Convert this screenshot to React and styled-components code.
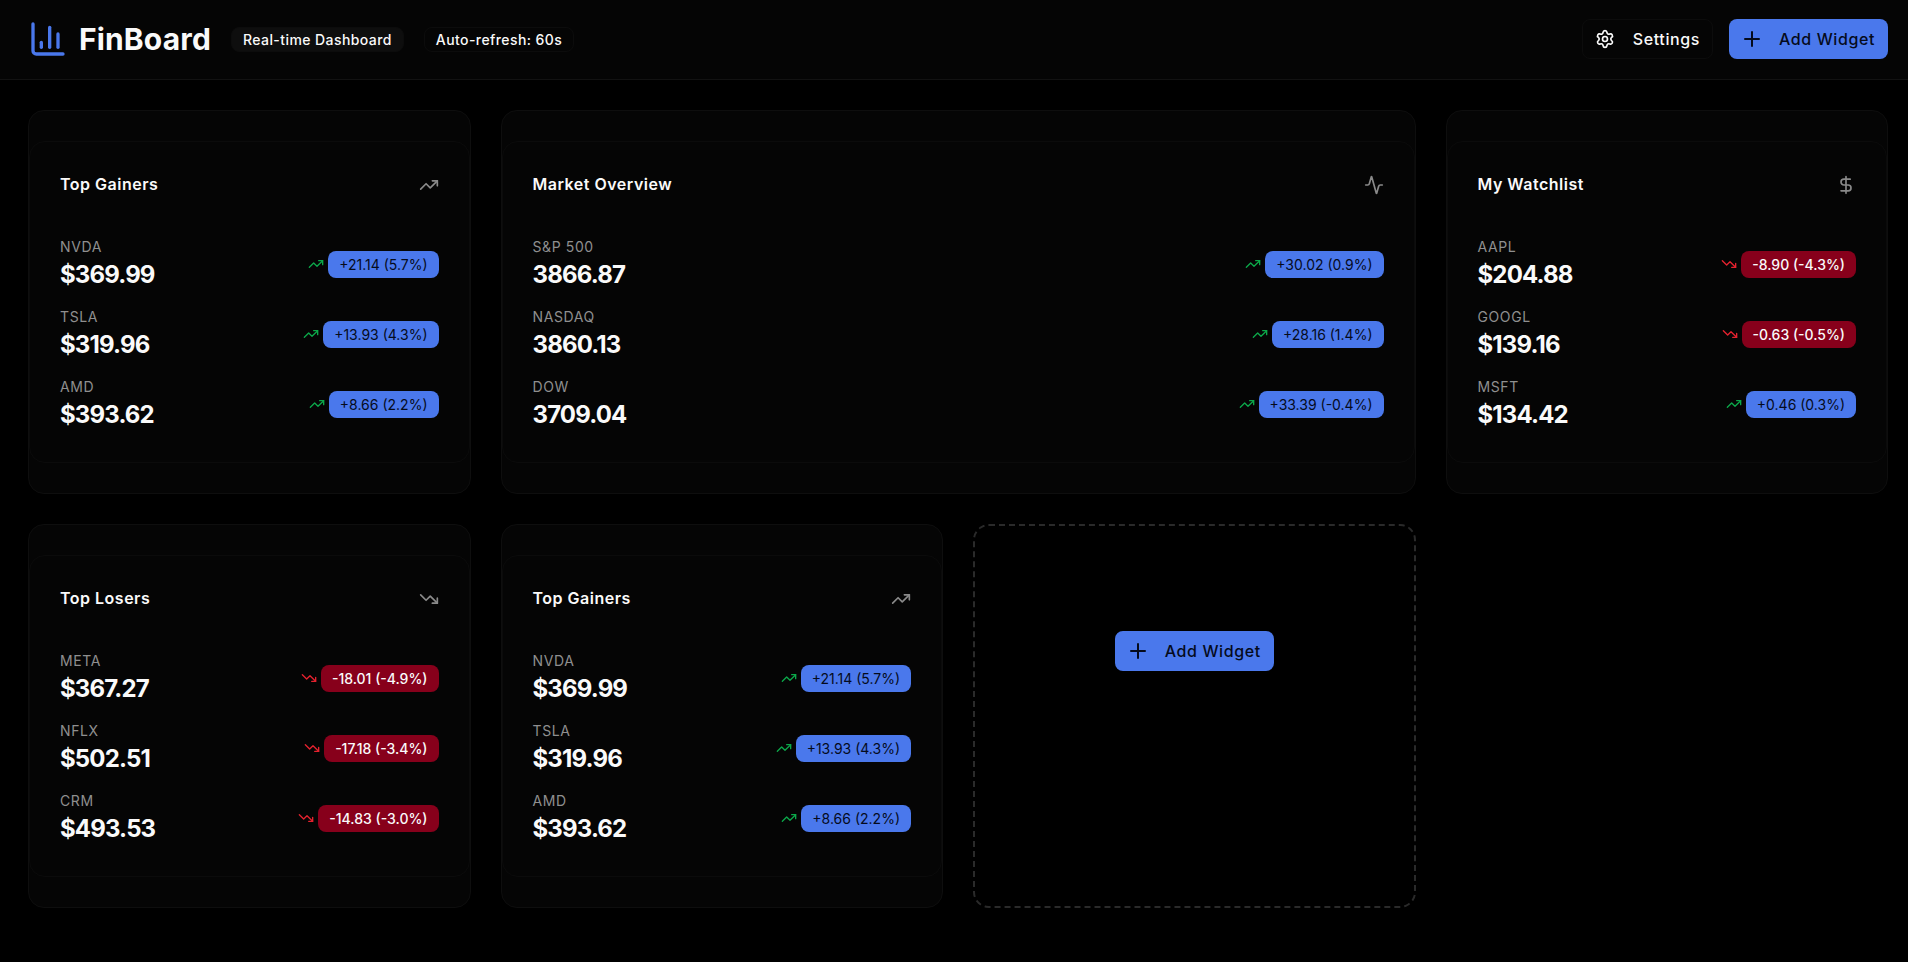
import React from 'react';
import styled, { createGlobalStyle } from 'styled-components';
import { ChartColumn, Settings, Plus, TrendingUp, TrendingDown, Activity, DollarSign } from 'lucide-react';

const GlobalStyle = createGlobalStyle`
  * { box-sizing: border-box; }
  body {
    margin: 0;
    background: #000;
    color: #fafafa;
    font-family: Inter, "Liberation Sans", sans-serif;
  }
`;

const Page = styled.div`
  min-height: 100vh;
  background: #000;
`;
const Header = styled.header`
  height: 80px;
  display: flex;
  align-items: center;
  justify-content: space-between;
  padding: 0 20px 1px 28px;
  background: #050505;
  border-bottom: 1px solid #121212;
`;
const Brand = styled.div`
  display: flex;
  align-items: center;
  color: #4a78ec;
`;
const BrandName = styled.h1`
  margin: 0 20px 0 11px;
  font-size: 30px;
  line-height: 36px;
  font-weight: 700;
  letter-spacing: 0.15px;
  color: #fafafa;
`;
const Pill = styled.span`
  height: 25px;
  display: flex;
  align-items: center;
  padding: 0 11px;
  margin-right: ${p => p.$gap || 0}px;
  font-size: 14px;
  font-weight: 500;
  letter-spacing: 0.42px;
  color: #fafafa;
  border-radius: 8px;
  background: ${p => (p.$filled ? '#0e0e0e' : 'transparent')};
  border: 1px solid #0c0c0c;
`;
const Actions = styled.div`
  display: flex;
  gap: 16px;
`;
const GhostButton = styled.button`
  height: 40px;
  display: flex;
  align-items: center;
  gap: 18px;
  padding: 0 12px;
  font: 500 16px Inter, sans-serif;
  letter-spacing: 0.6px;
  color: #fafafa;
  background: #050505;
  border: 1px solid #0c0c0c;
  border-radius: 8px;
`;
const AddButton = styled.button`
  height: 40px;
  width: 159px;
  display: flex;
  align-items: center;
  gap: 15px;
  padding: 0 11px;
  font: 500 16px Inter, sans-serif;
  letter-spacing: 0.6px;
  white-space: nowrap;
  color: #050b1c;
  background: #4a78ec;
  border: none;
  border-radius: 8px;
`;
const Grid = styled.main`
  display: grid;
  grid-template-columns: repeat(4, 1fr);
  grid-auto-rows: 384px;
  gap: 30px;
  padding: 30px 20px 28px 28px;
`;
const Widget = styled.section`
  grid-column: span ${p => p.$span || 1};
  padding: 30px 0;
  background: #050505;
  border: 1px solid #0e0e0e;
  border-radius: 16px;
`;
const Card = styled.div`
  height: 100%;
  padding: 30px;
  background: #050505;
  border: 1px solid #0b0b0b;
  border-radius: 16px;
`;
const CardHead = styled.div`
  display: flex;
  align-items: center;
  justify-content: space-between;
  height: 24px;
  margin-bottom: 41px;
  color: #8a8a8a;
`;
const CardTitle = styled.h3`
  margin: 0;
  font-size: 16px;
  font-weight: 600;
  letter-spacing: 0.5px;
  color: #fafafa;
`;
const HeadIcon = styled.span`
  display: flex;
  padding-top: 2px;
`;
const Rows = styled.div`
  display: flex;
  flex-direction: column;
  gap: 16px;
`;
const Row = styled.div`
  height: 54px;
  display: flex;
  align-items: center;
  justify-content: space-between;
`;
const Symbol = styled.div`
  font-size: 14px;
  line-height: 20px;
  margin-bottom: 2px;
  letter-spacing: 0.6px;
  color: #8f8f8f;
`;
const Price = styled.div`
  font-size: 24px;
  line-height: 32px;
  font-weight: 700;
  letter-spacing: -0.85px;
`;
const Change = styled.div`
  display: flex;
  align-items: center;
  gap: 4px;
  color: ${p => (p.$down ? '#e5222f' : '#0ca84a')};
`;
const Badge = styled.span`
  height: 27px;
  display: flex;
  align-items: center;
  padding: 0 11px;
  font-size: 14px;
  font-weight: ${p => (p.$down ? 500 : 400)};
  border-radius: 8px;
  color: ${p => (p.$down ? '#fafafa' : '#050b1c')};
  background: ${p => (p.$down ? '#87001b' : '#4a78ec')};
`;
const Placeholder = styled.div`
  display: flex;
  justify-content: center;
  padding-top: 105px;
  border: 2px dashed #2a2a2a;
  border-radius: 16px;
`;

const gainers = [
  ['NVDA', '$369.99', '+21.14 (5.7%)'],
  ['TSLA', '$319.96', '+13.93 (4.3%)'],
  ['AMD', '$393.62', '+8.66 (2.2%)'],
];
const losers = [
  ['META', '$367.27', '-18.01 (-4.9%)', true],
  ['NFLX', '$502.51', '-17.18 (-3.4%)', true],
  ['CRM', '$493.53', '-14.83 (-3.0%)', true],
];
const market = [
  ['S&P 500', '3866.87', '+30.02 (0.9%)'],
  ['NASDAQ', '3860.13', '+28.16 (1.4%)'],
  ['DOW', '3709.04', '+33.39 (-0.4%)'],
];
const watchlist = [
  ['AAPL', '$204.88', '-8.90 (-4.3%)', true],
  ['GOOGL', '$139.16', '-0.63 (-0.5%)', true],
  ['MSFT', '$134.42', '+0.46 (0.3%)'],
];

function StockWidget({ title, icon: Icon, rows, span }) {
  return (
    <Widget $span={span}>
      <Card>
        <CardHead>
          <CardTitle>{title}</CardTitle>
          <HeadIcon><Icon size={20} /></HeadIcon>
        </CardHead>
        <Rows>
          {rows.map(([symbol, price, change, down]) => (
            <Row key={symbol}>
              <div>
                <Symbol>{symbol}</Symbol>
                <Price>{price}</Price>
              </div>
              <Change $down={down}>
                {down ? <TrendingDown size={16} /> : <TrendingUp size={16} />}
                <Badge $down={down}>{change}</Badge>
              </Change>
            </Row>
          ))}
        </Rows>
      </Card>
    </Widget>
  );
}

export default function App() {
  return (
    <Page>
      <GlobalStyle />
      <Header>
        <Brand>
          <ChartColumn size={40} />
          <BrandName>FinBoard</BrandName>
          <Pill $filled $gap={20}>Real-time Dashboard</Pill>
          <Pill>Auto-refresh: 60s</Pill>
        </Brand>
        <Actions>
          <GhostButton><Settings size={20} />Settings</GhostButton>
          <AddButton><Plus size={24} />Add Widget</AddButton>
        </Actions>
      </Header>
      <Grid>
        <StockWidget title="Top Gainers" icon={TrendingUp} rows={gainers} />
        <StockWidget title="Market Overview" icon={Activity} rows={market} span={2} />
        <StockWidget title="My Watchlist" icon={DollarSign} rows={watchlist} />
        <StockWidget title="Top Losers" icon={TrendingDown} rows={losers} />
        <StockWidget title="Top Gainers" icon={TrendingUp} rows={gainers} />
        <Placeholder>
          <AddButton><Plus size={24} />Add Widget</AddButton>
        </Placeholder>
      </Grid>
    </Page>
  );
}
